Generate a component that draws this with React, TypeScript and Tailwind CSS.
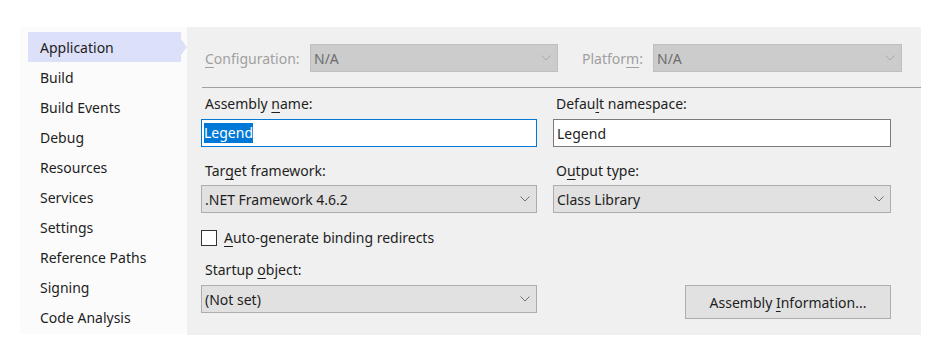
import React from "react";

const font = { fontFamily: '"Noto Sans", "Liberation Sans", sans-serif' };

const sections = [
  "Application",
  "Build",
  "Build Events",
  "Debug",
  "Resources",
  "Services",
  "Settings",
  "Reference Paths",
  "Signing",
  "Code Analysis",
];

function Chevron({ disabled }: { disabled?: boolean }) {
  return (
    <svg width="10" height="6" viewBox="0 0 10 6" className="shrink-0">
      <path d="M0.5 0.5 L5 5 L9.5 0.5" fill="none" stroke={disabled ? "#a8a8a8" : "#707070"} strokeWidth="1" />
    </svg>
  );
}

function Select({ value, disabled, className = "" }: { value: string; disabled?: boolean; className?: string }) {
  return (
    <div
      className={`flex h-[28px] items-center justify-between border pl-[3px] pr-[6px] ${
        disabled ? "border-[#bfbfbf] bg-[#cccccc] text-[#6d6d6d]" : "border-[#adadad] bg-[#e1e1e1] text-[#1e1e1e]"
      } ${className}`}
    >
      <span>{value}</span>
      <Chevron disabled={disabled} />
    </div>
  );
}

// access key underline
function Ak({ pre, k, post }: { pre: string; k: string; post: string }) {
  return (
    <>
      {pre}
      <span className="underline underline-offset-[3px]">{k}</span>
      {post}
    </>
  );
}

export default function App() {
  return (
    <div className="h-[359px] w-[944px] bg-white pl-[20px] pt-[27px] text-[14px]" style={font}>
      <div className="flex">
        {/* page list */}
        <div className="h-[307px] w-[167px] bg-[#fbfbfb] pl-[8px] pt-[5px]">
          {sections.map((s, i) => (
            <div key={s} className="relative">
              <div
                className={`h-[30px] w-[153px] pl-[12px] pt-[1px] leading-[30px] text-[#1e1e1e] ${
                  i === 0 ? "bg-[#dce0f8]" : ""
                }`}
              >
                {s}
              </div>
              {i === 0 && (
                <div className="absolute left-[153px] top-[7px] h-0 w-0 border-y-[8px] border-l-[6px] border-y-transparent border-l-[#dce0f8]" />
              )}
            </div>
          ))}
        </div>

        {/* property page */}
        <div className="h-[308px] w-[734px] bg-[#f0f0f0] pt-[17px]">
          <div className="flex h-[28px] items-center pl-[18px] pr-[19px]">
            <span className="w-[105px] text-[#a0a0a0]">
              <Ak pre="" k="C" post="onfiguration:" />
            </span>
            <Select value="N/A" disabled className="w-[248px]" />
            <span className="ml-[24px] w-[71px] text-[#a0a0a0]">
              <Ak pre="Platfor" k="m" post=":" />
            </span>
            <Select value="N/A" disabled className="w-[249px]" />
          </div>

          <div className="ml-[15px] mt-[15px] h-px bg-[#a0a0a0]" />

          <div className="grid grid-cols-[336px_338px] gap-x-[16px] pl-[14px] pt-[6px] text-[#1e1e1e]">
            <div>
              <div className="h-[20px] pl-[4px] leading-[20px]">
                <Ak pre="Assembly " k="n" post="ame:" />
              </div>
              <div className="mt-[5px] flex h-[28px] items-center border border-[#0078d7] bg-white pl-[2px]">
                <span className="bg-[#0078d7] leading-[20px] text-white">Legend</span>
              </div>
            </div>
            <div>
              <div className="h-[20px] pl-[3px] leading-[20px]">
                <Ak pre="Defau" k="l" post="t namespace:" />
              </div>
              <div className="mt-[5px] flex h-[28px] items-center border border-[#7a7a7a] bg-white pl-[3px]">
                Legend
              </div>
            </div>

            <div className="mt-[14px]">
              <div className="h-[20px] pl-[4px] leading-[20px]">
                <Ak pre="Tar" k="g" post="et framework:" />
              </div>
              <Select value=".NET Framework 4.6.2" className="mt-[4px]" />
            </div>
            <div className="mt-[14px]">
              <div className="h-[20px] pl-[3px] leading-[20px]">
                <Ak pre="O" k="u" post="tput type:" />
              </div>
              <Select value="Class Library" className="mt-[4px]" />
            </div>

            <div className="col-span-2 mt-[17px] flex h-[16px] items-center">
              <div className="h-[16px] w-[16px] border border-[#333333] bg-white" />
              <span className="ml-[7px] leading-[16px]">
                <Ak pre="" k="A" post="uto-generate binding redirects" />
              </span>
            </div>

            <div className="mt-[14px]">
              <div className="h-[20px] pl-[4px] leading-[20px]">
                <Ak pre="Startup " k="o" post="bject:" />
              </div>
              <Select value="(Not set)" className="mt-[5px]" />
            </div>
            <div className="flex items-end justify-end">
              <button className="mb-[-6px] h-[34px] w-[206px] border border-[#adadad] bg-[#e1e1e1] text-[#1e1e1e]">
                <Ak pre="Assembly " k="I" post="nformation..." />
              </button>
            </div>
          </div>
        </div>
      </div>
    </div>
  );
}
